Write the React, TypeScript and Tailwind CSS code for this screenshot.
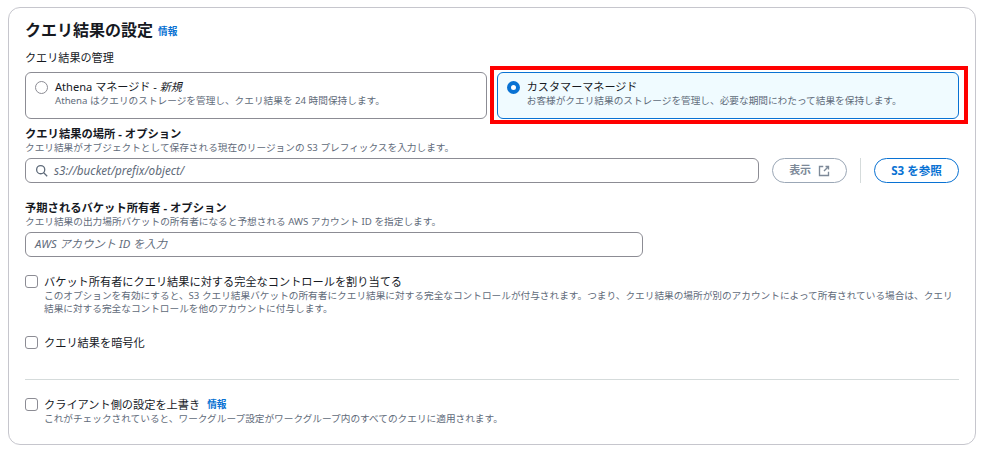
import React from "react";

const font = { fontFamily: '"Noto Sans", "Noto Sans CJK JP", sans-serif' };

function Check({ label, info, desc, className }: { label: string; info?: boolean; desc?: React.ReactNode; className?: string }) {
  return (
    <div className={`flex gap-[6px] ${className ?? ""}`}>
      <div className="w-[13px] h-[13px] mt-[1px] shrink-0 rounded-[3px] border border-[#8c8c94] bg-white" />
      <div>
        <div className="flex items-center h-[15px] pt-[1px] text-[11.2px] leading-[14px] text-[#16191f]">
          {label}
          {info && <span className="ml-[7px] text-[9.7px] font-bold text-[#0972d3]">情報</span>}
        </div>
        {desc && <div className="text-[9.67px] leading-[13px] text-[#5f6b7a]">{desc}</div>}
      </div>
    </div>
  );
}

function Field({ label, desc }: { label: string; desc: string }) {
  return (
    <div className="pt-[1px]">
      <div className="text-[11.3px] leading-[14px] font-bold text-[#16191f]">{label}</div>
      <div className="text-[9.67px] leading-[14px] text-[#5f6b7a]">{desc}</div>
    </div>
  );
}

export default function App() {
  return (
    <div style={font} className="w-[987px] h-[450px] bg-white pt-[7px] pl-[8px] overflow-hidden">
      <div className="relative w-[968px] h-[438px] rounded-[12px] border border-[#c6c6cd] bg-white pt-[12px] pl-[16px] pr-[16px]">
        <div className="flex items-center h-[20px]">
          <span className="text-[16px] leading-[20px] font-bold text-[#16191f]">クエリ結果の設定</span>
          <span className="ml-[5px] mt-[5px] text-[9.7px] font-bold text-[#0972d3]">情報</span>
        </div>
        <div className="mt-[11px] text-[11.1px] leading-[14px] text-[#16191f]">クエリ結果の管理</div>
        <div className="mt-[7px] flex gap-[10px]">
          <div className="flex-1 h-[47px] rounded-[6px] border border-[#8c8c94] bg-white flex pl-[9px] pt-[7px] gap-[7px]">
            <div className="w-[13px] h-[13px] mt-[1px] rounded-full border border-[#8c8c94]" />
            <div>
              <div className="text-[11.1px] leading-[14px] text-[#16191f]">Athena マネージド - <em>新規</em></div>
              <div className="text-[9.67px] leading-[14px] text-[#5f6b7a]">Athena はクエリのストレージを管理し、クエリ結果を 24 時間保持します。</div>
            </div>
          </div>
          <div className="flex-1 h-[47px] rounded-[6px] border-[1.5px] border-[#0972d3] bg-[#f0fbff] flex pl-[8.5px] pt-[7px] gap-[7px]">
            <div className="w-[13px] h-[13px] mt-[1px] rounded-full border-[4px] border-[#0972d3] bg-white" />
            <div>
              <div className="text-[11.1px] leading-[14px] text-[#16191f]">カスタマーマネージド</div>
              <div className="text-[9.67px] leading-[14px] text-[#5f6b7a]">お客様がクエリ結果のストレージを管理し、必要な期間にわたって結果を保持します。</div>
            </div>
          </div>
        </div>
        <div className="absolute left-[481px] top-[58px] w-[478px] h-[58px] border-[4px] border-[#ff0000] pointer-events-none" />

        <div className="mt-[7px]">
          <Field label="クエリ結果の場所 - オプション" desc="クエリ結果がオブジェクトとして保存される現在のリージョンの S3 プレフィックスを入力します。" />
        </div>
        <div className="mt-[3px] flex items-center h-[25px]">
          <div className="w-[735px] h-[25px] rounded-[6px] border border-[#8c8c94] flex items-center pl-[9px] gap-[6px]">
            <svg width="13" height="13" viewBox="0 0 16 16" fill="none" stroke="#5f6b7a" strokeWidth="1.6">
              <circle cx="7" cy="7" r="5" />
              <path d="M10.7 10.7 15 15" />
            </svg>
            <span className="text-[11.7px] italic text-[#5f6b7a]">s3://bucket/prefix/object/</span>
          </div>
          <div className="ml-[13px] w-[75px] h-[25px] rounded-full border-[1.5px] border-[#9ba7b6] flex items-center justify-center gap-[7px] text-[11px] font-bold text-[#7d8998]">
            表示
            <svg width="12" height="12" viewBox="0 0 16 16" fill="none" stroke="#7d8998" strokeWidth="1.8">
              <path d="M7 2H2v12h12V9" />
              <path d="M10 2h4v4M14 2 8 8" />
            </svg>
          </div>
          <div className="ml-[13px] w-px h-[25px] bg-[#d5dbdb]" />
          <div className="ml-[13px] w-[85px] h-[25px] rounded-full border-[1.5px] border-[#0972d3] flex items-center justify-center text-[11.6px] font-bold text-[#0972d3]">S3 を参照</div>
        </div>

        <div className="mt-[17px]">
          <Field label="予期されるバケット所有者 - オプション" desc="クエリ結果の出力場所バケットの所有者になると予想される AWS アカウント ID を指定します。" />
        </div>
        <div className="mt-[3px] w-[618px] h-[25px] rounded-[6px] border border-[#8c8c94] flex items-center pl-[9px] text-[11.3px] italic text-[#5f6b7a]">AWS アカウント ID を入力</div>

        <Check
          className="mt-[17px]"
          label="バケット所有者にクエリ結果に対する完全なコントロールを割り当てる"
          desc={
            <>
              このオプションを有効にすると、S3 クエリ結果バケットの所有者にクエリ結果に対する完全なコントロールが付与されます。つまり、クエリ結果の場所が別のアカウントによって所有されている場合は、クエリ
              <br />
              結果に対する完全なコントロールを他のアカウントに付与します。
            </>
          }
        />
        <Check className="mt-[20px]" label="クエリ結果を暗号化" />
        <div className="mt-[29px] h-px bg-[#d5dbdb]" />
        <Check
          className="mt-[17px]"
          label="クライアント側の設定を上書き"
          info
          desc="これがチェックされていると、ワークグループ設定がワークグループ内のすべてのクエリに適用されます。"
        />
      </div>
    </div>
  );
}
